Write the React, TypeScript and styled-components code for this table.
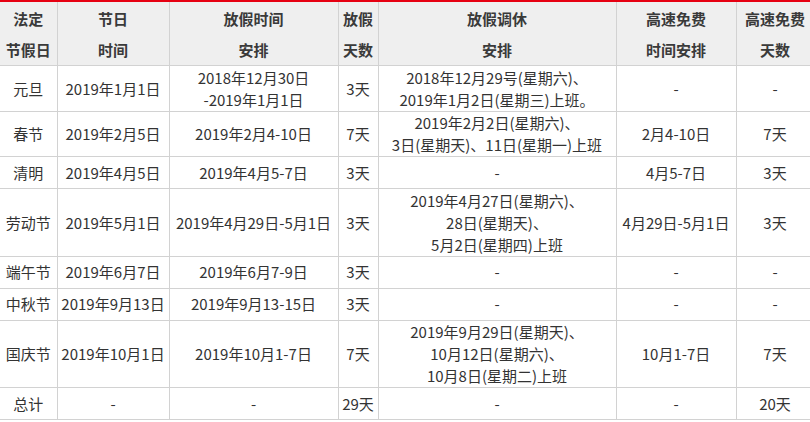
import styled, { createGlobalStyle } from "styled-components";

const GlobalStyle = createGlobalStyle`
	html, body {
		margin: 0;
		padding: 0;
		background: #fff;
		overflow: hidden;
	}
	body {
		font-family: "Noto Sans CJK SC", "Noto Sans", sans-serif;
		color: #333;
	}
`;

const Table = styled.table`
	width: 814px;
	table-layout: fixed;
	border-collapse: collapse;
	border-top: 2px solid #e60012;
	font-size: 15px;
`;

const HeadCell = styled.th`
	background: #efefef;
	border: 1px solid #d2d2d2;
	border-top: none;
	padding: 1px 0 0;
	line-height: 31px;
	font-weight: bold;
	color: #3a3a3a;
	text-align: center;
	vertical-align: middle;
	white-space: nowrap;

	&:first-child {
		border-left: none;
	}
`;

const Cell = styled.td`
	border: 1px solid #d2d2d2;
	height: 30.5px;
	padding: 0.5px 0 0;
	line-height: 22px;
	text-align: center;
	vertical-align: middle;
	white-space: nowrap;

	&:first-child {
		border-left: none;
	}
`;

interface Holiday {
	name: string;
	date: string;
	range: string[];
	days: string;
	swap: string[];
	freeRange: string;
	freeDays: string;
}

const holidays: Holiday[] = [
	{
		name: "元旦",
		date: "2019年1月1日",
		range: ["2018年12月30日", "-2019年1月1日"],
		days: "3天",
		swap: ["2018年12月29号(星期六)、", "2019年1月2日(星期三)上班。"],
		freeRange: "-",
		freeDays: "-",
	},
	{
		name: "春节",
		date: "2019年2月5日",
		range: ["2019年2月4-10日"],
		days: "7天",
		swap: ["2019年2月2日(星期六)、", "3日(星期天)、11日(星期一)上班"],
		freeRange: "2月4-10日",
		freeDays: "7天",
	},
	{
		name: "清明",
		date: "2019年4月5日",
		range: ["2019年4月5-7日"],
		days: "3天",
		swap: ["-"],
		freeRange: "4月5-7日",
		freeDays: "3天",
	},
	{
		name: "劳动节",
		date: "2019年5月1日",
		range: ["2019年4月29日-5月1日"],
		days: "3天",
		swap: ["2019年4月27日(星期六)、", "28日(星期天)、", "5月2日(星期四)上班"],
		freeRange: "4月29日-5月1日",
		freeDays: "3天",
	},
	{
		name: "端午节",
		date: "2019年6月7日",
		range: ["2019年6月7-9日"],
		days: "3天",
		swap: ["-"],
		freeRange: "-",
		freeDays: "-",
	},
	{
		name: "中秋节",
		date: "2019年9月13日",
		range: ["2019年9月13-15日"],
		days: "3天",
		swap: ["-"],
		freeRange: "-",
		freeDays: "-",
	},
	{
		name: "国庆节",
		date: "2019年10月1日",
		range: ["2019年10月1-7日"],
		days: "7天",
		swap: ["2019年9月29日(星期天)、", "10月12日(星期六)、", "10月8日(星期二)上班"],
		freeRange: "10月1-7日",
		freeDays: "7天",
	},
	{
		name: "总计",
		date: "-",
		range: ["-"],
		days: "29天",
		swap: ["-"],
		freeRange: "-",
		freeDays: "20天",
	},
];

const Lines = ({ lines }: { lines: string[] }) => (
	<>
		{lines.map((line, i) => (
			<span key={i}>
				{i > 0 && <br />}
				{line}
			</span>
		))}
	</>
);

const widths = [57, 112, 169, 40, 238, 120, 78];

export default function App() {
	return (
		<>
			<GlobalStyle />
			<Table>
				<colgroup>
					{widths.map((w, i) => (
						<col key={i} style={{ width: w }} />
					))}
				</colgroup>
				<thead>
					<tr>
						<HeadCell>
							<Lines lines={["法定", "节假日"]} />
						</HeadCell>
						<HeadCell>
							<Lines lines={["节日", "时间"]} />
						</HeadCell>
						<HeadCell>
							<Lines lines={["放假时间", "安排"]} />
						</HeadCell>
						<HeadCell>
							<Lines lines={["放假", "天数"]} />
						</HeadCell>
						<HeadCell>
							<Lines lines={["放假调休", "安排"]} />
						</HeadCell>
						<HeadCell>
							<Lines lines={["高速免费", "时间安排"]} />
						</HeadCell>
						<HeadCell>
							<Lines lines={["高速免费", "天数"]} />
						</HeadCell>
					</tr>
				</thead>
				<tbody>
					{holidays.map((h) => (
						<tr key={h.name}>
							<Cell>{h.name}</Cell>
							<Cell>{h.date}</Cell>
							<Cell>
								<Lines lines={h.range} />
							</Cell>
							<Cell>{h.days}</Cell>
							<Cell>
								<Lines lines={h.swap} />
							</Cell>
							<Cell>{h.freeRange}</Cell>
							<Cell>{h.freeDays}</Cell>
						</tr>
					))}
				</tbody>
			</Table>
		</>
	);
}
